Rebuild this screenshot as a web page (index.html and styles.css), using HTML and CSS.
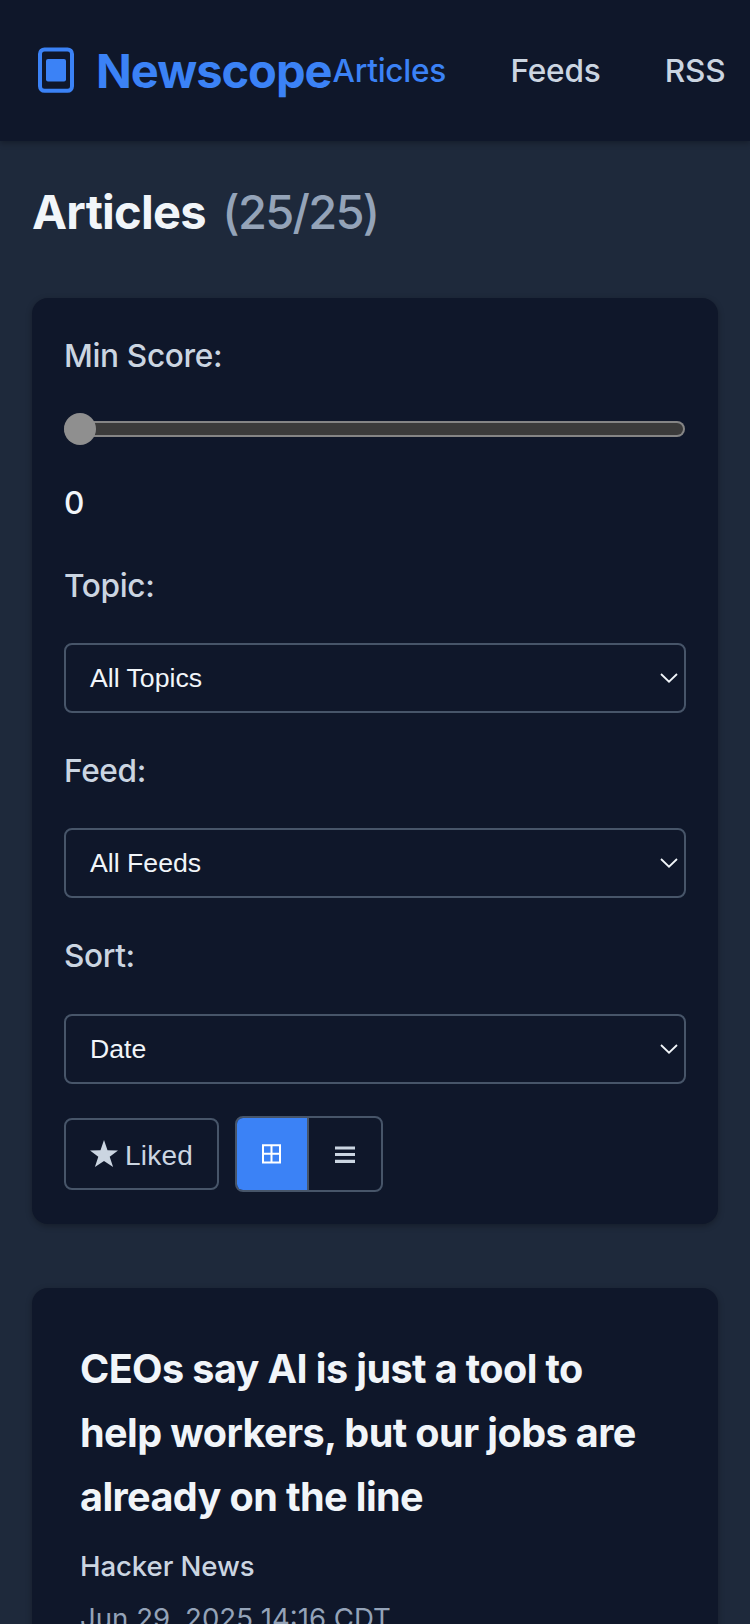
FILE: index.html
```html
<!DOCTYPE html>
<html lang="en">
<head>
<meta charset="utf-8">
<title>Newscope</title>
<link rel="stylesheet" href="styles.css">
</head>
<body>
<header class="header">
  <div class="brand">
    <svg class="brand-icon" viewBox="0 0 48 48" aria-hidden="true">
      <rect x="8" y="3.4" width="32" height="41.4" rx="4.5" fill="none" stroke="currentColor" stroke-width="4"/>
      <rect x="14" y="13" width="20" height="22.4" rx="2" fill="currentColor"/>
    </svg>
    <span class="brand-name">Newscope</span>
  </div>
  <nav class="nav">
    <a class="nav-link nav-link-active">Articles</a>
    <a class="nav-link">Feeds</a>
    <a class="nav-link">RSS</a>
  </nav>
</header>
<main class="main">
  <h1 class="heading"><span class="heading-title">Articles</span><span class="heading-count">(25/25)</span></h1>
  <section class="panel">
    <label class="label" for="score">Min Score:</label>
    <input class="slider" id="score" type="range" min="0" max="10" value="0">
    <span class="score">0</span>
    <span class="label">Topic:</span>
    <div class="select"><span>All Topics</span><svg class="chevron" viewBox="0 0 18 10"><path d="M1 1l8 7.7L17 1"/></svg></div>
    <span class="label">Feed:</span>
    <div class="select"><span>All Feeds</span><svg class="chevron" viewBox="0 0 18 10"><path d="M1 1l8 7.7L17 1"/></svg></div>
    <span class="label">Sort:</span>
    <div class="select"><span>Date</span><svg class="chevron" viewBox="0 0 18 10"><path d="M1 1l8 7.7L17 1"/></svg></div>
    <div class="actions">
      <button class="liked">
        <svg class="star" viewBox="0 0 28 27"><path d="M14 0l3.5 10.2 10.5.2-8.3 6.4 3.4 10.2-9.1-6-9.1 6 3.4-10.2L0 10.4l10.5-.2z"/></svg>
        <span>Liked</span>
      </button>
      <div class="toggle">
        <button class="view view-active" aria-label="Grid view">
          <svg class="view-icon" viewBox="0 0 20 20"><path d="M1 1.2h17v17.3H1zM9.5 1.2v17.3M1 9.8h17" fill="none" stroke="currentColor" stroke-width="2"/></svg>
        </button>
        <button class="view view-list" aria-label="List view">
          <svg class="view-icon" viewBox="0 0 20 20"><path d="M0 2.4h20v3.1H0zM0 9h20v3.1H0zM0 15.8h20v3.1H0z" fill="currentColor"/></svg>
        </button>
      </div>
    </div>
  </section>
  <article class="card">
    <h2 class="card-title">CEOs say AI is just a tool to help workers, but our jobs are already on the line</h2>
    <span class="card-source">Hacker News</span>
    <span class="card-date">Jun 29, 2025 14:16 CDT</span>
  </article>
</main>
</body>
</html>
```

FILE: styles.css
```css
* { box-sizing: border-box; }

html { height: 100%; overflow: hidden; }

body {
  height: 100%;
  margin: 0;
  overflow: hidden;
  background: #1e293b;
  color: #f1f5f9;
  font-family: Inter, "Liberation Sans", sans-serif;
  font-size: 31.6px;
  letter-spacing: -.35px;
  line-height: 51.2px;
}

.header {
  display: flex;
  align-items: center;
  padding: 32px;
  background: #0f172a;
  box-shadow: 0 2px 6px rgba(0, 0, 0, .3);
}

.brand { display: flex; align-items: center; gap: 16px; color: #3b82f6; }
.brand-icon { width: 48px; height: 48px; }
.brand-name {
  width: 236.5px;
  padding-top: 1px;
  font-size: 47px;
  font-weight: 700;
  letter-spacing: -1px;
  line-height: 75.8px;
}

.nav { display: flex; gap: 64.4px; }
.nav-link { color: #cbd5e1; font-weight: 500; letter-spacing: -.25px; }
.nav-link-active { color: #3b82f6; }

.main { padding: 32px; }

.heading {
  display: flex;
  gap: 16.5px;
  margin: 0 0 48px;
  padding-top: 1px;
  font-size: 47px;
  line-height: 75.8px;
}
.heading-title { font-weight: 700; letter-spacing: -.75px; }
.heading-count { color: #94a3b8; font-weight: 450; letter-spacing: -1.7px; }

.panel, .card {
  display: flex;
  flex-direction: column;
  border-radius: 16px;
  background: #0f172a;
  box-shadow: 0 2px 6px rgba(0, 0, 0, .3);
}

.panel { gap: 32px; padding: 32px; margin-bottom: 64px; }

.label { color: #cbd5e1; font-weight: 500; }
.score { font-weight: 450; }

.slider {
  width: 621px;
  height: 32px;
  margin: 0;
  appearance: none;
  background: transparent;
}
.slider::-webkit-slider-runnable-track {
  height: 16px;
  border: 2px solid #858585;
  border-left: 0;
  border-radius: 8px;
  background: #3b3b3b;
}
.slider::-webkit-slider-thumb {
  width: 32px;
  height: 32px;
  margin-top: -10px;
  appearance: none;
  border-radius: 50%;
  background: #8f8f8f;
}

.select {
  display: flex;
  align-items: center;
  justify-content: space-between;
  height: 70px;
  padding: 0 6px 0 24px;
  border: 2px solid #475569;
  border-radius: 8px;
  font-family: "Liberation Sans", sans-serif;
  font-size: 26.67px;
  letter-spacing: 0;
  line-height: 32px;
}
.chevron {
  width: 18px;
  height: 10px;
  fill: none;
  stroke: #f1f5f9;
  stroke-width: 1.8;
}

.actions { display: flex; align-items: center; gap: 16px; }

button {
  padding: 0;
  border: 0;
  background: none;
  color: #cbd5e1;
}

.liked {
  display: flex;
  align-items: center;
  gap: 7px;
  width: 155px;
  height: 72px;
  padding: 4px 0 0 24px;
  border: 2px solid #475569;
  border-radius: 8px;
  font: 28px/32px "Liberation Sans", sans-serif;
  letter-spacing: .2px;
}
.star { width: 28px; height: 27px; margin-bottom: 4px; fill: #cbd5e1; }

.toggle {
  display: flex;
  width: 148px;
  height: 76px;
  overflow: hidden;
  border: 2px solid #475569;
  border-radius: 8px;
}
.view { display: flex; align-items: center; justify-content: center; width: 70px; height: 72px; }
.view-icon { width: 20px; height: 20px; }
.view-active { background: #3b82f6; color: #fff; }
.view-list { width: 74px; border-left: 2px solid #475569; }

.card { height: 376px; padding: 49px 48px 48px; }
.card-title {
  margin: 0 0 15px;
  font-size: 39.6px;
  font-weight: 700;
  letter-spacing: -.6px;
  line-height: 64px;
}
.card-source, .card-date { font-size: 27.6px; line-height: 44.8px; }
.card-source { margin-bottom: 8px; color: #cbd5e1; font-weight: 500; letter-spacing: -.1px; }
.card-date { color: #94a3b8; letter-spacing: 0; }
```
